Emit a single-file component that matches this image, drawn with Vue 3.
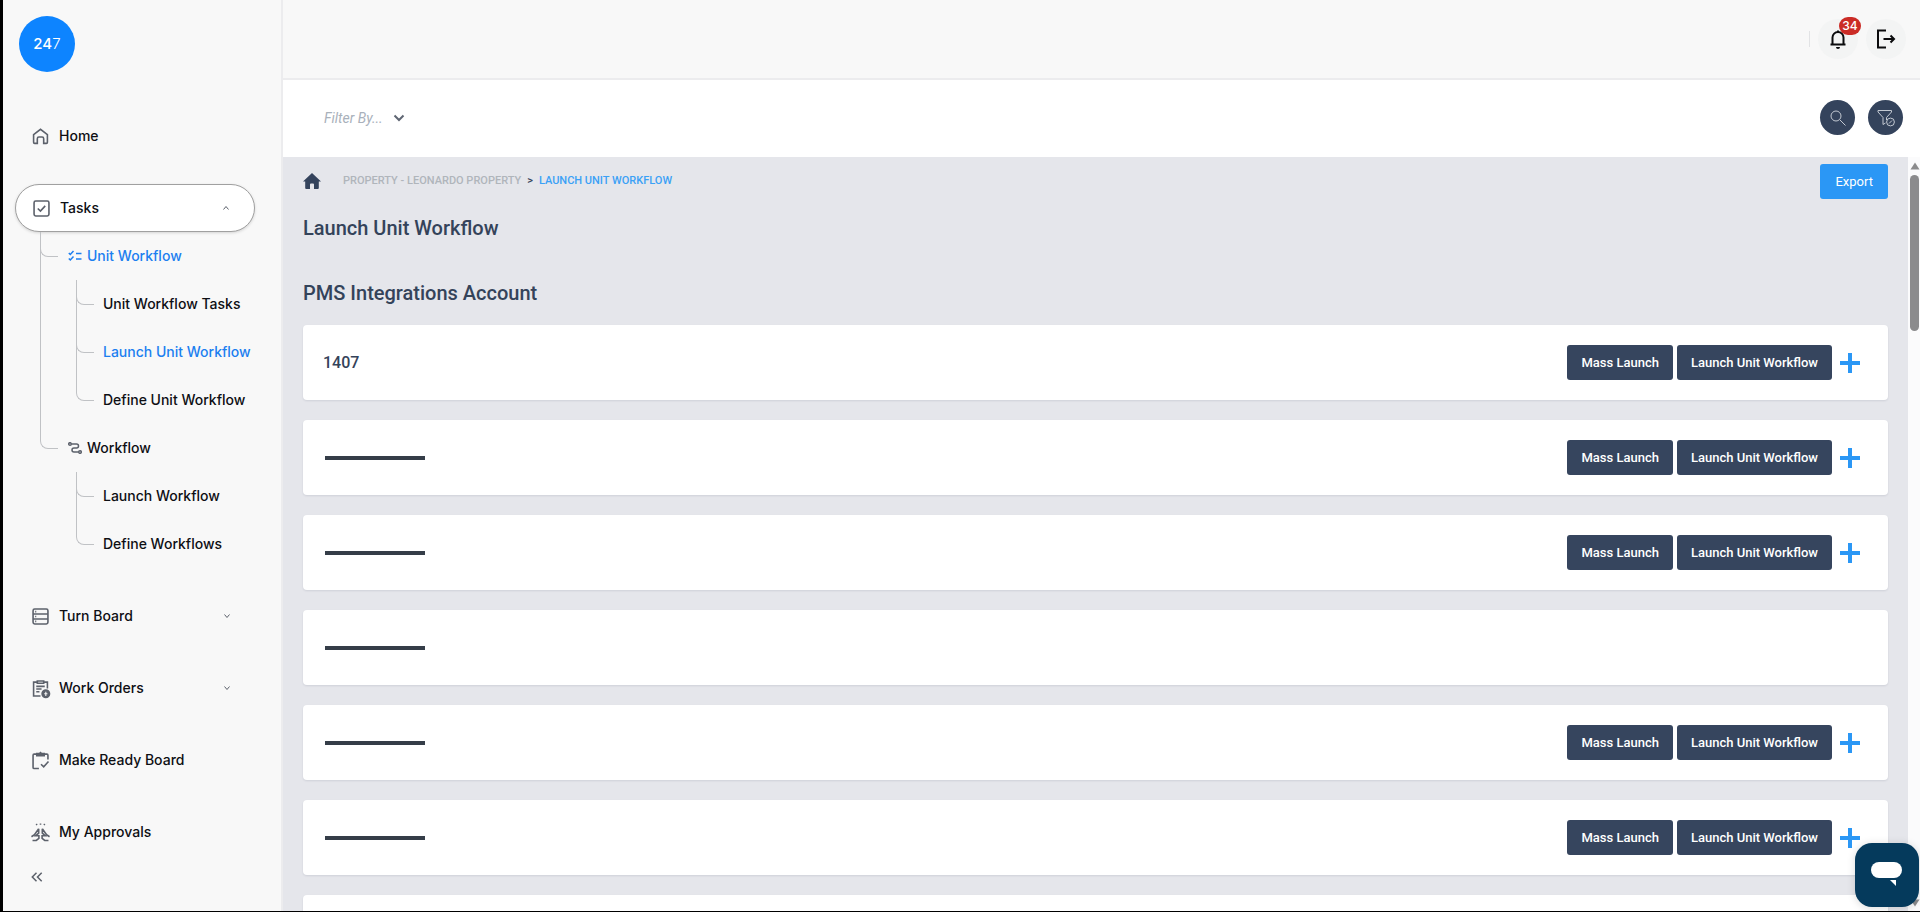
<script setup>
import { ref } from 'vue'

const filter = ref('')
const tree = [
  {
    label: 'Unit Workflow', icon: 'checks', active: true,
    children: [
      { label: 'Unit Workflow Tasks' },
      { label: 'Launch Unit Workflow', active: true },
      { label: 'Define Unit Workflow' },
    ],
  },
  {
    label: 'Workflow', icon: 'route',
    children: [{ label: 'Launch Workflow' }, { label: 'Define Workflows' }],
  },
]
const cards = [
  { id: 1, name: '1407', actions: true },
  { id: 2, actions: true },
  { id: 3, actions: true },
  { id: 4, actions: false },
  { id: 5, actions: true },
  { id: 6, actions: true },
  { id: 7, actions: false },
]
</script>

<template>
  <div class="shell">
    <aside class="sidebar">
      <a class="logo" href="#"><b>24</b>7</a>
      <nav class="nav" aria-label="Main">
        <a class="item" href="#">
          <svg class="ico" viewBox="0 0 16 16"><path d="M1.5 6.2 8 1.2l6.500 5V13.500a1 1 0 0 1-1 1H11V10a1.500 1.500 0 0 0-1.500-1.500h-3A1.500 1.500 0 0 0 5 10v4.500H2.500a1 1 0 0 1-1-1z" /></svg>
          <span>Home</span>
        </a>
        <div>
          <button class="item pill" type="button" aria-expanded="true">
            <svg class="ico" viewBox="0 0 16 16"><rect x="1" y="1" width="14" height="14" rx="1.500" /><path d="m4.500 8 2.500 2.500 4.500-5" /></svg>
            <span>Tasks</span>
            <svg class="caret" viewBox="0 0 8 8"><path d="m1.500 5.500 2.500-3 2.500 3" /></svg>
          </button>
          <ul class="tree">
            <li v-for="group in tree" :key="group.label">
              <a class="row" :class="{ active: group.active }" href="#">
                <svg v-if="group.icon === 'checks'" class="sub-ico" viewBox="0 0 14 12"><path d="m.800 3 1.500 1.500L5.500 1M.800 8.500 2.300 10l3.200-3.500M8 3.500h5.500M8 9h5.500" /></svg>
                <svg v-else class="sub-ico" viewBox="0 0 14 12"><circle cx="2" cy="2" r="1.300" /><circle cx="12" cy="10" r="1.300" /><path d="M3.500 2h5a2 2 0 0 1 0 4H6a2 2 0 0 0 0 4h4.500" /></svg>
                {{ group.label }}
              </a>
              <ul class="tree sub">
                <li v-for="child in group.children" :key="child.label">
                  <a class="row" :class="{ active: child.active }" href="#">{{ child.label }}</a>
                </li>
              </ul>
            </li>
          </ul>
        </div>
        <button class="item" type="button" aria-expanded="false">
          <svg class="ico" viewBox="0 0 16 16"><rect x="1" y="1" width="14" height="14" rx="1.500" /><path d="M1 5.700h14M1 10.300h14M3 3.400h1M3 8h1M3 12.600h1" /></svg>
          <span>Turn Board</span>
          <svg class="caret" viewBox="0 0 8 8"><path d="m1.500 2.500 2.500 3 2.500-3" /></svg>
        </button>
        <button class="item" type="button" aria-expanded="false">
          <svg class="ico" viewBox="0 0 16 16"><path d="M5 2H1.500v13H8M11 2h3.500v6M5 1h6v2H5zM4 6h8M4 8.500h5M4 11h3" /><circle class="solid" cx="13" cy="13" r="3.500" /><path class="light" d="M13 11v4M11.500 13h3" /></svg>
          <span>Work Orders</span>
          <svg class="caret" viewBox="0 0 8 8"><path d="m1.500 2.500 2.500 3 2.500-3" /></svg>
        </button>
        <a class="item" href="#">
          <svg class="ico" viewBox="0 0 16 16"><path d="M4 2H2a1 1 0 0 0-1 1v11.500a1 1 0 0 0 1 1h4.500M12 2h2a1 1 0 0 1 1 1v4M8.500 11.500 11 14l4.500-5" /><path class="solid" d="M4.500 3.500v-2H7l1-1 1 1h2.500v2z" /></svg>
          <span>Make Ready Board</span>
        </a>
        <a class="item" href="#">
          <svg class="ico" viewBox="0 0 16 16"><path d="M6.300 4.500 2.300 10-.500 12M6.300 4.500v4L3.500 11h3v2.500L4 15.500H.500M9.700 4.500l4 5.500 2.800 2M9.700 4.500v4l2.800 2.500h-3v2.500l2.500 2h3.500M4 0l.700 1M8-.500v1.200M12 0l-.700 1" /></svg>
          <span>My Approvals</span>
        </a>
      </nav>
      <button class="collapse" type="button" aria-label="Collapse menu">
        <svg viewBox="0 0 12 10"><path d="M5.500.800 1.300 5l4.200 4.200M10.700.800 6.500 5l4.200 4.200" /></svg>
      </button>
    </aside>

    <div class="main">
      <header class="topbar">
        <span class="divider"></span>
        <button class="round" type="button" aria-label="Notifications">
          <svg viewBox="0 0 20 20"><path d="M2.500 15.500h15M4.500 15.500V8.500a5.500 5.500 0 0 1 11 0v7M10 3V1.500" /><path class="clapper" d="M8 18h4a2 2 0 0 1-4 0z" /></svg>
          <span class="badge">34</span>
        </button>
        <button class="round" type="button" aria-label="Log out">
          <svg viewBox="0 0 20 20"><path d="M10 1.500H2v17h8M7.500 10H18M14.500 6.500 18 10l-3.500 3.500" /></svg>
        </button>
      </header>

      <div class="filterbar">
        <div class="filter">
          <select v-model="filter" aria-label="Filter by">
            <option value="">Filter By...</option>
          </select>
          <svg viewBox="0 0 12 8"><path d="m1.500 1.500 4.500 4.500 4.500-4.500" /></svg>
        </div>
        <div class="tools">
          <button class="tool" type="button" aria-label="Search">
            <svg viewBox="0 0 18 18"><circle cx="7" cy="7" r="5" /><path d="m10.800 10.800 5.700 5.700" /></svg>
          </button>
          <button class="tool" type="button" aria-label="Clear filter">
            <svg viewBox="0 0 18 18"><path d="M1 1.500h13.500v1.500L9.500 8.500V11M1 1.500V3l5 5.500v7l2.500-1.500" /><circle cx="13.500" cy="13" r="3.900" /><path d="m12 14.500 3-3" /></svg>
          </button>
        </div>
      </div>

      <div class="viewport">
        <main class="content">
          <div class="crumb-line">
            <nav class="crumbs" aria-label="Breadcrumb">
              <a class="home" href="#" aria-label="Home"><svg viewBox="0 0 18 16"><path d="M9 0 18 8.500h-2.200V15a1 1 0 0 1-1 1H11v-4.500a1 1 0 0 0-1-1H8a1 1 0 0 0-1 1V16H3.200a1 1 0 0 1-1-1V8.500H0z" /></svg></a>
              <a class="parent" href="#">PROPERTY - LEONARDO PROPERTY</a>
              <span class="sep">&gt;</span>
              <a class="current" href="#">LAUNCH UNIT WORKFLOW</a>
            </nav>
            <button class="btn export" type="button">Export</button>
          </div>
          <h1>Launch Unit Workflow</h1>
          <h2>PMS Integrations Account</h2>
          <div class="cards">
            <section v-for="card in cards" :key="card.id" class="card">
              <h3 v-if="card.name">{{ card.name }}</h3>
              <span v-else class="masked"></span>
              <div v-if="card.actions" class="actions">
                <button class="btn" type="button">Mass Launch</button>
                <button class="btn" type="button">Launch Unit Workflow</button>
                <button class="plus" type="button" aria-label="Expand">
                  <svg viewBox="0 0 20 20"><path d="M10 0v20M0 10h20" /></svg>
                </button>
              </div>
            </section>
          </div>
        </main>
        <div class="scrollbar">
          <svg viewBox="0 0 10 8"><path d="M5 .500 9.500 7.500h-9z" /></svg>
          <span class="thumb"></span>
          <svg class="down" viewBox="0 0 10 8"><path d="M5 7.500.500.500h9z" /></svg>
        </div>
      </div>
    </div>

    <button class="chat" type="button" aria-label="Open chat">
      <svg viewBox="0 0 32 26"><rect x="0" y="0" width="31" height="16" rx="8" /><path d="M19 18h6v6z" /></svg>
    </button>
  </div>
</template>

<style>
body {
  background: #f8f8f8;
}
</style>

<style scoped>
* {
  box-sizing: border-box;
}
button {
  border: 0;
  padding: 0;
  background: none;
  font: inherit;
  color: inherit;
  cursor: pointer;
}
a {
  color: inherit;
  text-decoration: none;
}
ul {
  list-style: none;
  margin: 0;
  padding: 0;
}
svg {
  display: block;
  flex: none;
  fill: none;
  stroke: currentColor;
}
.shell {
  display: flex;
  height: 100vh;
  overflow: hidden;
  border-left: 3px solid #000;
  border-bottom: 1px solid #000;
  font-family: Roboto, "Liberation Sans", sans-serif;
  color: #34435a;
}
.sidebar {
  flex: none;
  width: 280px;
  padding: 16px 26px 0 12px;
  border-right: 2px solid #ececee;
  background: #f8f8f8;
  font: 500 14px/20px Inter, sans-serif;
  color: #0e0f14;
}
.logo {
  display: flex;
  align-items: center;
  justify-content: center;
  width: 56px;
  height: 56px;
  margin-left: 4px;
  border-radius: 50%;
  background: #0d84ff;
  color: #fff;
  font-size: 15px;
  font-weight: 300;
}
.logo b {
  font-weight: 500;
}
.nav {
  display: flex;
  flex-direction: column;
  gap: 24px;
  margin-top: 40px;
}
.item {
  display: flex;
  align-items: center;
  gap: 10px;
  width: 100%;
  height: 48px;
  padding: 0 24px 0 17px;
  text-align: left;
}
.item span {
  flex: 1;
}
.pill {
  border: 1px solid #a0a0a0;
  border-radius: 24px;
  background: #fff;
  box-shadow: 0 1px 3px rgba(0, 0, 0, 0.15);
}
.ico {
  width: 17px;
  height: 17px;
  color: #5c616b;
  stroke-width: 1.500;
  overflow: visible;
}
.ico .solid {
  fill: currentColor;
}
.ico .light {
  stroke: #f8f8f8;
  stroke-width: 1;
}
.caret {
  width: 8px;
  height: 8px;
  color: #5c616b;
}
.tree {
  padding-left: 25px;
}
.tree.sub {
  padding-left: 36px;
}
.tree li {
  position: relative;
}
.tree li::before {
  content: "";
  position: absolute;
  left: 0;
  top: 0;
  width: 17px;
  height: 24px;
  border: solid #c0c2c5;
  border-width: 0 0 1px 1px;
  border-bottom-left-radius: 8px;
}
.tree li:not(:last-child)::after {
  content: "";
  position: absolute;
  left: 0;
  top: 0;
  bottom: 0;
  border-left: 1px solid #c0c2c5;
}
.row {
  display: flex;
  align-items: center;
  gap: 5px;
  height: 48px;
  padding-left: 28px;
}
.sub .row {
  padding-left: 27px;
}
.row.active {
  color: #1c7ff0;
}
.sub-ico {
  width: 14px;
  height: 12px;
  stroke-width: 1.500;
}
.row:not(.active) .sub-ico {
  color: #5c616b;
}
.collapse {
  display: block;
  margin: 16px 0 0 16px;
}
.collapse svg {
  width: 12px;
  height: 10px;
  color: #5c616b;
  stroke-width: 1.500;
}
.main {
  flex: 1;
  min-width: 0;
  display: flex;
  flex-direction: column;
}
.topbar {
  flex: none;
  display: flex;
  align-items: center;
  justify-content: flex-end;
  gap: 8px;
  height: 80px;
  padding-right: 14px;
  border-bottom: 2px solid #ececee;
  background: #f8f8f8;
}
.divider {
  width: 1px;
  height: 16px;
  background: #e2e3e5;
}
.round {
  position: relative;
  display: grid;
  place-items: center;
  width: 40px;
  height: 40px;
  border-radius: 50%;
  background: #f3f4f4;
  color: #0b0b0d;
}
.round svg {
  width: 20px;
  height: 20px;
  stroke-width: 2;
}
.round .clapper {
  fill: currentColor;
  stroke: none;
}
.badge {
  position: absolute;
  top: -2px;
  right: -3px;
  width: 22px;
  border-radius: 9px;
  background: #cb2c26;
  color: #fff;
  font: 500 12px/18px Inter, sans-serif;
  text-align: center;
}
.filterbar {
  flex: none;
  display: flex;
  align-items: center;
  justify-content: space-between;
  height: 77px;
  padding: 0 17px 2px 41px;
  background: #fff;
}
.filter {
  display: grid;
  align-items: center;
  justify-items: end;
}
.filter select,
.filter svg {
  grid-area: 1 / 1;
}
.filter select {
  appearance: none;
  width: 81px;
  padding: 0;
  border: 0;
  background: none;
  color: #a9b1bb;
  font: italic 14px/24px Roboto, sans-serif;
}
.filter svg {
  width: 12px;
  height: 8px;
  color: #5f6673;
  stroke-width: 2;
  pointer-events: none;
}
.tools {
  display: flex;
  gap: 13px;
}
.tool {
  display: grid;
  place-items: center;
  width: 35px;
  height: 35px;
  border-radius: 50%;
  background: #34435c;
  color: #c3c9d2;
}
.tool svg {
  width: 18px;
  height: 18px;
  stroke-width: 1;
}
.viewport {
  flex: 1;
  min-height: 0;
  display: flex;
  background: #e5e6eb;
}
.content {
  flex: 1;
  min-width: 0;
  overflow: hidden;
  padding: 7px 20px 0;
}
.crumb-line,
.crumbs {
  display: flex;
  align-items: center;
}
.crumb-line {
  justify-content: space-between;
}
.crumbs {
  gap: 6px;
  padding-bottom: 2px;
  font-size: 11px;
  font-weight: 500;
}
.home {
  margin-right: 16px;
  color: #34435c;
}
.home svg {
  width: 18px;
  height: 16px;
  fill: currentColor;
  stroke: none;
}
.parent {
  color: #b0b5bb;
}
.sep {
  color: #34435a;
}
.current {
  color: #3ba1f6;
}
.btn {
  height: 35px;
  padding: 0 14px;
  border-radius: 3px;
  background: #36455e;
  color: #fff;
  font-size: 13px;
  font-weight: 500;
}
.export {
  padding: 0 15px;
  background: #2b97f5;
  font-weight: 400;
}
h1,
h2,
h3 {
  margin: 0;
  font-weight: 500;
}
h1,
h2 {
  font-size: 20px;
  line-height: 24px;
}
h1 {
  margin-top: 17px;
}
h2 {
  margin-top: 41px;
}
h3 {
  font-size: 16px;
}
.cards {
  display: flex;
  flex-direction: column;
  gap: 20px;
  margin-top: 20px;
}
.card {
  flex: none;
  display: flex;
  align-items: center;
  justify-content: space-between;
  height: 75px;
  padding: 0 28px 0 20px;
  border-radius: 4px;
  background: #fff;
  box-shadow: 0 1px 2px rgba(50, 60, 90, 0.12);
}
.masked {
  width: 100px;
  height: 4px;
  margin-left: 2px;
  background: #353d48;
}
.actions {
  display: flex;
  align-items: center;
  gap: 4px;
}
.plus {
  margin-left: 4px;
  color: #2b97f5;
}
.plus svg {
  width: 20px;
  height: 20px;
  stroke-width: 4;
}
.scrollbar {
  flex: none;
  display: flex;
  flex-direction: column;
  align-items: center;
  gap: 5px;
  width: 12px;
  padding: 5px 0 4px 1px;
  background: #fbfbfc;
}
.scrollbar svg {
  width: 10px;
  height: 8px;
  fill: #8b8b8d;
  stroke: none;
}
.scrollbar .down {
  margin-top: auto;
}
.thumb {
  width: 9px;
  height: 21%;
  border-radius: 5px;
  background: #8b8b8d;
}
.chat {
  position: fixed;
  right: 1px;
  bottom: 5px;
  display: grid;
  place-items: center;
  width: 64px;
  height: 64px;
  border-radius: 17px;
  background: #053a5c;
  box-shadow: 0 1px 8px rgba(0, 0, 0, 0.15);
}
.chat svg {
  width: 32px;
  height: 26px;
  fill: #fff;
  stroke: none;
}
</style>
